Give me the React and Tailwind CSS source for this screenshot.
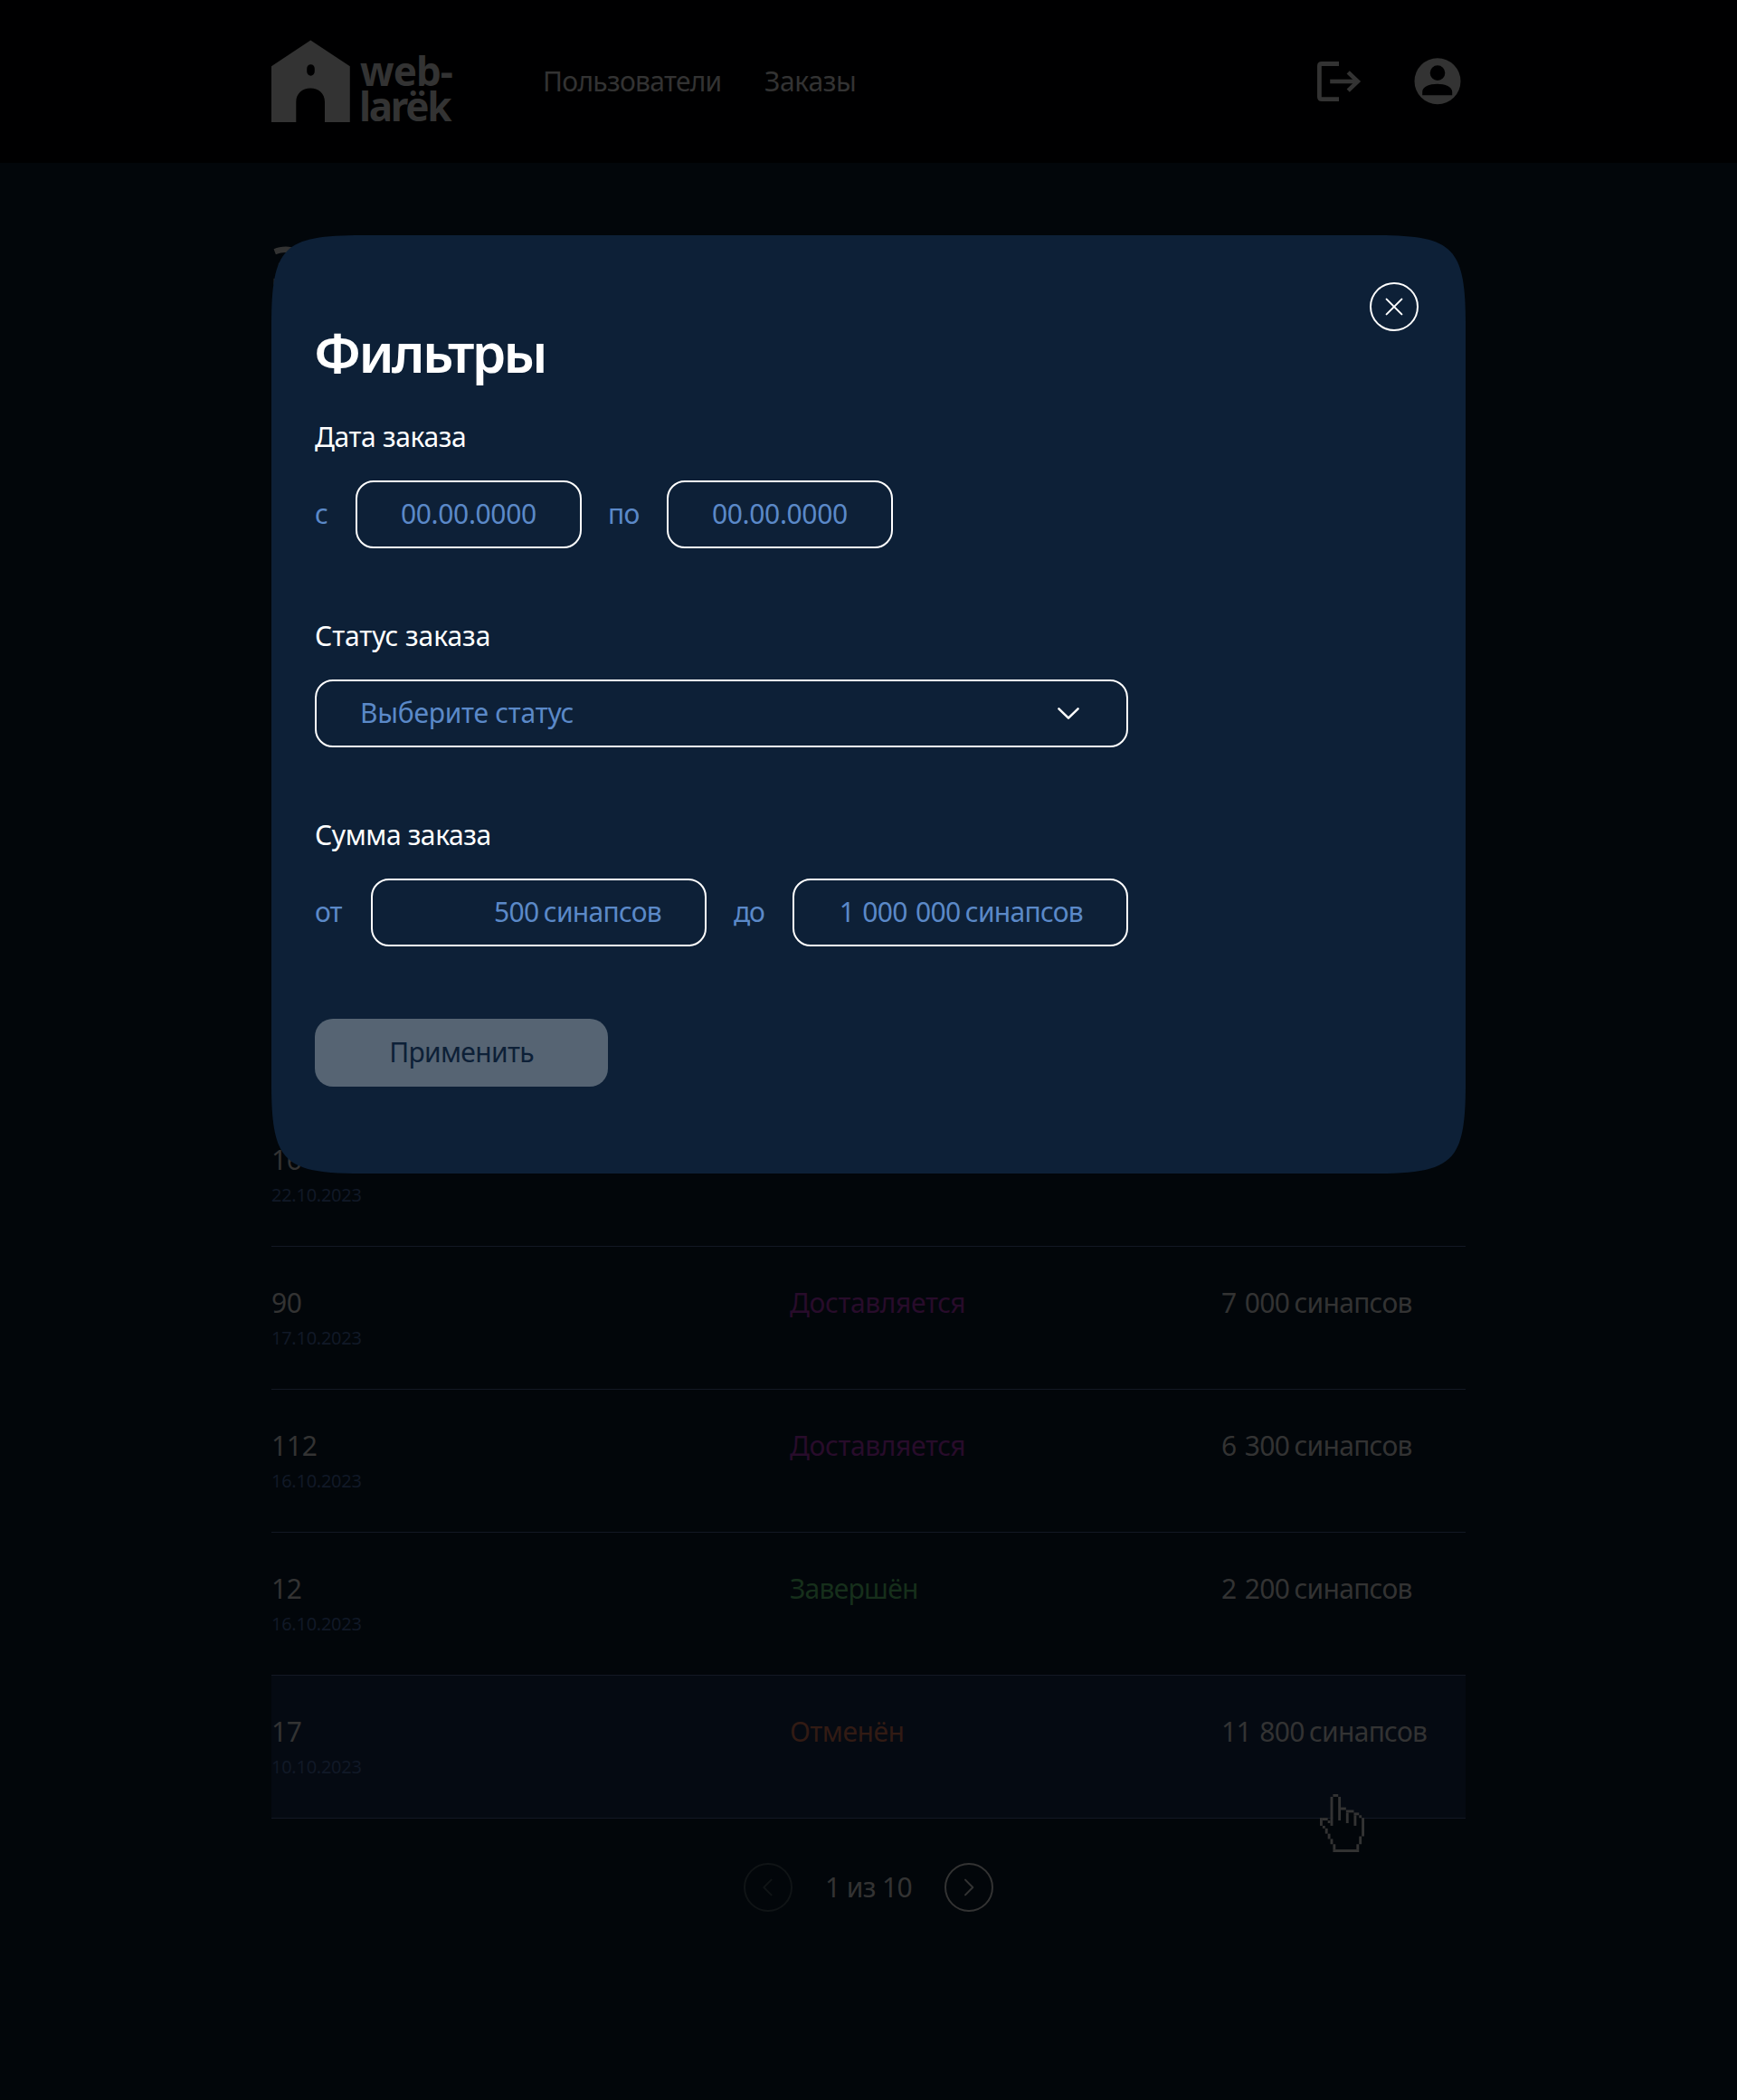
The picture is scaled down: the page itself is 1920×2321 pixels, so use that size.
const orders = [
  { id: "90", date: "17.10.2023", status: "Доставляется", tone: "text-[#280c2b] tracking-[-0.36px]", amount: "7 000" },
  { id: "112", date: "16.10.2023", status: "Доставляется", tone: "text-[#280c2b] tracking-[-0.36px]", amount: "6 300" },
  { id: "12", date: "16.10.2023", status: "Завершён", tone: "text-[#162f1b] tracking-[-0.72px]", amount: "2 200" },
  { id: "17", date: "10.10.2023", status: "Отменён", tone: "text-[#321b14] tracking-[-0.47px]", amount: "11 800", active: true },
];

// Runs of the pixel-art hand cursor: [column, row, width, height]
const handPixels = [
  [5, 0, 2, 1], [4, 1, 1, 11], [7, 1, 1, 9], [8, 5, 2, 1], [10, 6, 3, 1], [10, 7, 1, 4],
  [13, 7, 2, 1], [13, 8, 1, 4], [15, 8, 1, 1], [16, 9, 1, 7], [15, 16, 1, 3], [14, 19, 1, 2],
  [5, 21, 10, 1], [5, 19, 1, 2], [4, 17, 1, 2], [3, 15, 1, 2], [2, 13, 1, 2], [1, 12, 1, 1],
  [0, 9, 1, 3], [1, 9, 2, 1], [3, 10, 1, 1],
];

function HandCursor() {
  return (
    <svg className="absolute right-[112px] top-[131px] h-[64px] w-[49px]" viewBox="0 0 17 22" preserveAspectRatio="none">
      <path fill="#02060a" d="M5 1h2v5h3v1h3v1h2v1h1v7h-1v3h-1v2H6v-2H5v-2H4v-2H3v-2H2v-1H1v-2h2v1h2z" />
      {handPixels.map(([x, y, w, h]) => (
        <rect key={`${x}-${y}`} x={x} y={y} width={w} height={h} fill="#333333" />
      ))}
    </svg>
  );
}

function Logo() {
  return (
    <div className="flex w-[300px]">
      <svg className="mt-[44px] h-[91px] w-[87px] shrink-0" viewBox="0 0 87 91" fill="#333333">
        <path
          fillRule="evenodd"
          d="M43.3.6 86.8 29.3V91H59V68.500C59 59.500 52 53.600 43.200 53.600S27.300 59.500 27.300 68.500V91H0V29.300ZM43.500 27.300C41 27.300 39.200 29.300 39.200 32V35C39.200 37.600 41 39.700 43.500 39.700S47.800 37.600 47.800 35V32C47.800 29.300 46 27.300 43.500 27.300Z"
        />
      </svg>
      <div className="mt-[59px] ml-[11px] text-[44px] font-bold leading-[39.3px] text-[#333333]">
        <div className="tracking-[-1px]">web-</div>
        <div className="-ml-px tracking-[-2.3px]">larëk</div>
      </div>
    </div>
  );
}

function Header() {
  return (
    <header className="h-[180px] bg-[#000001]">
      <div className="mx-auto flex h-full w-[1320px] items-start">
        <Logo />
        <nav className="mt-[72px] flex leading-[35px] text-[#333333]">
          <a className="w-[245px] tracking-[-0.7px]">Пользователи</a>
          <a className="tracking-[-0.31px]">Заказы</a>
        </nav>
        <div className="mt-[64px] mr-[5px] ml-auto flex gap-[58px]">
          <svg className="h-[52px] w-[50px]" viewBox="0 0 50 52" fill="none" stroke="#333333" strokeWidth="4.8">
            <path d="M25 6.500H6Q3.400 6.500 3.400 9V43Q3.400 45.600 6 45.600H25" />
            <path d="M15.200 26H45" strokeWidth="4.600" />
            <path d="M35.200 15.800 45.800 26 35.200 36.200" strokeWidth="4.600" />
          </svg>
          <svg className="size-[52px]" viewBox="0 0 52 52" fill="#333333">
            <path
              fillRule="evenodd"
              d="M26 .2A25.500 25.500 0 1 0 26 51.200 25.500 25.500 0 0 0 26 .2ZM26 8.300A8.300 8.300 0 1 1 26 24.900 8.300 8.300 0 0 1 26 8.300ZM9.200 41.200V37.500C9.200 32 17 28.800 25.700 28.800S42.200 32 42.200 37.500V41.200Z"
            />
          </svg>
        </div>
      </div>
    </header>
  );
}

function Price({ amount }) {
  return (
    <span className="whitespace-nowrap tracking-[-0.66px] [word-spacing:2px]">
      {amount}
      <span className="tracking-[-0.72px] [word-spacing:-1.7px]"> синапсов</span>
    </span>
  );
}

function OrderNumber({ id, date }) {
  return (
    <div className="w-[573px]">
      <div className="tracking-[-0.3px]">{id}</div>
      <div className="mt-[10px] text-[20px] leading-[24px] tracking-[-0.26px] text-[#111927]">{date}</div>
    </div>
  );
}

function OrderRow({ order }) {
  return (
    <div className={`relative flex h-[158px] border-b border-[#131824] pt-[44px] leading-[35px] text-[#333333] ${order.active ? "bg-[#050a12]" : ""}`}>
      <OrderNumber id={order.id} date={order.date} />
      <div className={`w-[477px] ${order.tone}`}>{order.status}</div>
      <Price amount={order.amount} />
      {order.active && <HandCursor />}
    </div>
  );
}

function RoundButton({ className, d }) {
  return (
    <svg className={`size-[54px] ${className}`} viewBox="0 0 54 54" fill="none" stroke="currentColor" strokeWidth="2" strokeLinecap="round" strokeLinejoin="round">
      <circle cx="27" cy="27" r="26" />
      <path d={d} />
    </svg>
  );
}

function Field({ className = "", children }) {
  return (
    <div className={`flex h-[75px] shrink-0 items-center rounded-[20px] border-2 border-white pb-0.5 whitespace-nowrap text-[#5b89c8] ${className}`}>
      {children}
    </div>
  );
}

function FiltersModal() {
  return (
    <section className="absolute top-[260px] left-[300px] h-[1037px] w-[1320px] bg-[#0d2037] px-12 pt-[99px] leading-[35px] text-white [clip-path:path('M0_100C0_13_13_0_100_0H1220C1307_0_1320_13_1320_100V937C1320_1024_1307_1037_1220_1037H100C13_1037_0_1024_0_937Z')]">
      <h2 className="-ml-px text-[60px] font-semibold leading-[60px] tracking-[-2.7px]">Фильтры</h2>
      <RoundButton className="absolute top-[52px] right-[52px]" d="M18.600 18.600 35.400 35.400M35.400 18.600 18.600 35.400" />

      <h3 className="mt-[46px] tracking-[-0.36px]">Дата заказа</h3>
      <div className="mt-[31px] flex items-center">
        <span className="w-[45px] pb-0.5 text-[#5b89c8]">с</span>
        <Field className="w-[250px] pl-12 tracking-[-0.36px]">00.00.0000</Field>
        <span className="w-[94px] pb-0.5 pl-[29px] text-[#5b89c8] tracking-[-0.6px]">по</span>
        <Field className="w-[250px] pl-12 tracking-[-0.36px]">00.00.0000</Field>
      </div>

      <h3 className="mt-[79px] tracking-[-0.06px]">Статус заказа</h3>
      <Field className="mt-[31px] w-[899px] justify-between pr-[50px] pl-12 tracking-[-0.25px]">
        Выберите статус
        <svg className="h-[16px] w-[28px]" viewBox="0 0 28 16" fill="none" stroke="white" strokeWidth="2.500" strokeLinecap="round" strokeLinejoin="round">
          <path d="M3.400 3.300 14 13.700 24.600 3.300" />
        </svg>
      </Field>

      <h3 className="mt-[79px] tracking-[-0.4px]">Сумма заказа</h3>
      <div className="mt-[31px] flex items-center">
        <span className="w-[62px] pb-0.5 text-[#5b89c8] tracking-[-1px]">от</span>
        <Field className="w-[371px] justify-end pr-[48px]"><Price amount="500" /></Field>
        <span className="w-[95px] pb-0.5 pl-[30px] text-[#5b89c8] tracking-[-1.2px]">до</span>
        <Field className="w-[371px] justify-end pr-[48px]"><Price amount="1 000 000" /></Field>
      </div>

      <button className="mt-[80px] block h-[75px] w-[324px] rounded-[20px] bg-[#566473] pb-0.5 text-[#0d2037] tracking-[-0.68px]">
        Применить
      </button>
    </section>
  );
}

export default function App() {
  return (
    <div className="relative h-[2321px] w-[1920px] overflow-hidden bg-[#02060a] font-['Noto_Sans',sans-serif] text-[30px]">
      <Header />
      <main className="mx-auto w-[1320px]">
        <h1 className="pt-[83px] text-[60px] font-semibold leading-[60px] tracking-[-2.6px] text-[#333333]">Заказы</h1>
        <div className="mt-[897px] h-[158px] border-b border-[#131824] pt-[44px] leading-[35px] text-[#333333]">
          <OrderNumber id="16" date="22.10.2023" />
        </div>
        {orders.map((order) => (
          <OrderRow key={order.id} order={order} />
        ))}
        <div className="mt-[49px] flex items-center pl-[522px]">
          <RoundButton className="text-[#101416]" d="M30.600 18.600 22.300 27 30.600 35.400" />
          <span className="w-[168px] pb-0.5 pl-9 leading-[35px] tracking-[-0.61px] text-[#333333]">1 из 10</span>
          <RoundButton className="text-[#333333]" d="M23 18.600 31.300 27 23 35.400" />
        </div>
      </main>
      <FiltersModal />
    </div>
  );
}
